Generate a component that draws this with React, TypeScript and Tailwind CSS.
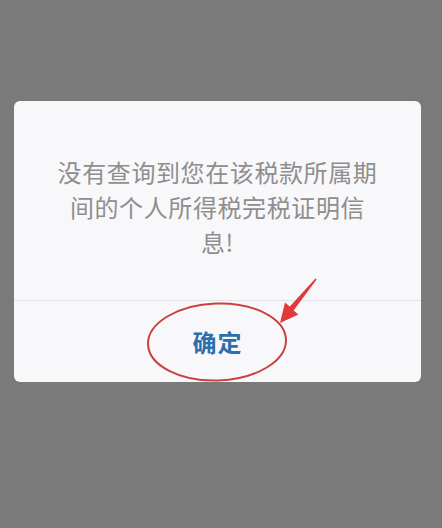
import React from "react";

const FONT = { fontFamily: '"Noto Sans CJK SC", "Noto Sans", sans-serif' };

function Annotation() {
  // red hand-drawn marks over the dialog: ellipse round the button and an arrow
  return (
    <svg
      className="absolute inset-0 pointer-events-none"
      width="407"
      height="281"
      viewBox="0 0 407 281"
    >
      <ellipse cx="203" cy="241" rx="69" ry="38.5" fill="none" stroke="#c8433f" strokeWidth="2" transform="rotate(-2 203 241)" />
      <polygon
        points="302.6,178.4 279.6,209.6 284.4,213.4 266,222 271,201.6 275.8,205.6 301.4,177.6"
        fill="#e03a3a"
      />
    </svg>
  );
}

export default function App() {
  return (
    <main className="h-[528px] w-full bg-[#7a7a7a] px-[14px] pt-[101px]" style={FONT}>
      <div className="relative w-[407px] h-[281px] rounded-[6px] bg-[#f8f8fa] flex flex-col overflow-hidden">
        <div className="h-[199px] px-[40px] pt-[53px] text-center">
          <p className="text-[24px] leading-[35px] tracking-[0.6px] text-[#8e8e8e]">
            没有查询到您在该税款所属期间的个人所得税完税证明信息!
          </p>
        </div>
        <div className="h-px bg-[#e2e2e4]" />
        <div className="flex-1 flex items-center justify-center">
          <span className="text-[24px] font-bold tracking-[1px] text-[#2d6fad]">确定</span>
        </div>
        <Annotation />
      </div>
    </main>
  );
}
